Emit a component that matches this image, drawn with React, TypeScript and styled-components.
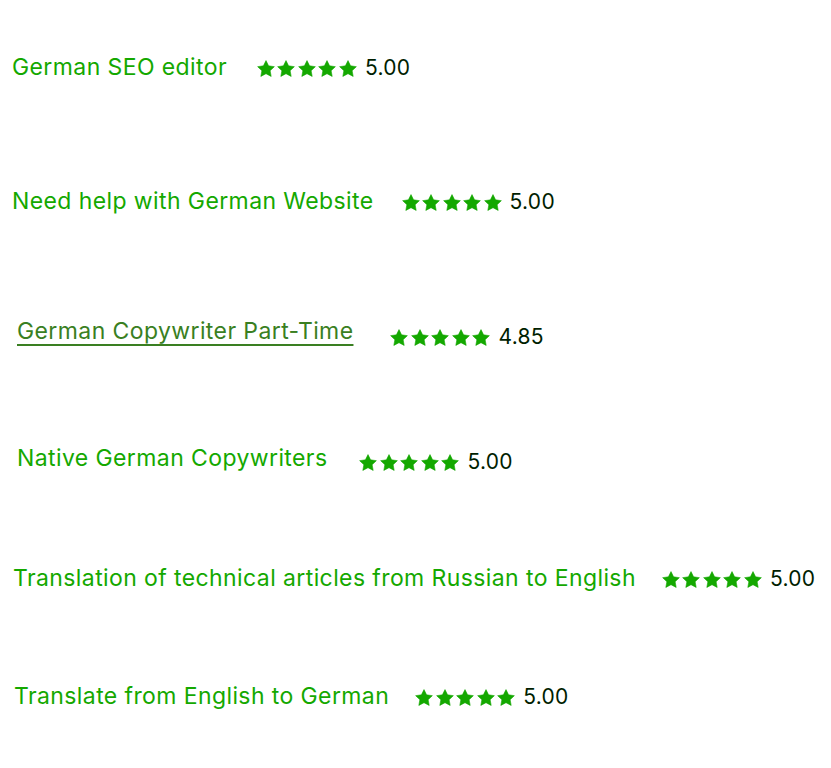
import React from 'react';
import styled, { createGlobalStyle } from 'styled-components';

const GlobalStyle = createGlobalStyle`
  html, body {
    margin: 0;
    padding: 0;
    background: #ffffff;
  }
  body {
    font-family: Inter, "Liberation Sans", Arial, sans-serif;
    -webkit-font-smoothing: antialiased;
  }
`;

interface IJob {
  title: string;
  rating: string;
  top: number;
  indent: number;
  gap: number;
  drop: number;
  active?: boolean;
}

const JOBS: IJob[] = [
  { title: 'German SEO editor', rating: '5.00', top: 0, indent: 12, gap: 30, drop: 1 },
  { title: 'Need help with German Website', rating: '5.00', top: 104, indent: 12, gap: 28, drop: 1 },
  { title: 'German Copywriter Part-Time', rating: '4.85', top: 100, indent: 17, gap: 37, drop: 6, active: true },
  { title: 'Native German Copywriters', rating: '5.00', top: 97, indent: 17, gap: 32, drop: 4 },
  { title: 'Translation of technical articles from Russian to English', rating: '5.00', top: 90, indent: 13, gap: 26, drop: 1 },
  { title: 'Translate from English to German', rating: '5.00', top: 88, indent: 14, gap: 26, drop: 1 },
];

// five-point star, slightly rounded at the tips
const Star = () => (
  <svg width="18" height="17" viewBox="0 0 24 23" aria-hidden="true">
    <path
      d="M12 0.8L15.5 7.9 23.3 9 17.6 14.4 19 22.2 12 18.5 5 22.2 6.4 14.4 0.7 9 8.5 7.9z"
      fill="#14a800"
      stroke="#14a800"
      strokeWidth="0.8"
      strokeLinejoin="round"
    />
  </svg>
);

export default function App() {
  return (
    <>
      <GlobalStyle />
      <List>
        {JOBS.map((job, idx) => (
          <Row key={idx} $top={job.top} $indent={job.indent} $gap={job.gap}>
            <Title href="#" $active={job.active}>
              {job.title}
            </Title>
            <Rating $drop={job.drop}>
              <Stars>
                {[0, 1, 2, 3, 4].map((s) => (
                  <Star key={s} />
                ))}
              </Stars>
              <Score>{job.rating}</Score>
            </Rating>
          </Row>
        ))}
      </List>
    </>
  );
}

const List = styled.div`
  display: flex;
  flex-direction: column;
  align-items: flex-start;
  padding-top: 52px;
`;

const Row = styled.div<{ $top: number; $indent: number; $gap: number }>`
  display: flex;
  align-items: center;
  height: 30px;
  margin-top: ${(p) => p.$top}px;
  padding-left: ${(p) => p.$indent}px;
  gap: ${(p) => p.$gap}px;
`;

const Title = styled.a<{ $active?: boolean }>`
  font-size: 23px;
  line-height: 30px;
  letter-spacing: 0.4px;
  white-space: nowrap;
  color: ${(p) => (p.$active ? '#3a7f22' : '#14a800')};
  text-decoration: ${(p) => (p.$active ? 'underline' : 'none')};
  text-decoration-thickness: 2px;
  text-underline-offset: 5px;
`;

const Rating = styled.div<{ $drop: number }>`
  display: flex;
  align-items: center;
  gap: 8px;
  padding-top: ${(p) => p.$drop * 2}px;
`;

const Stars = styled.div`
  display: flex;
  align-items: center;
  gap: 2.5px;
`;

const Score = styled.span`
  font-size: 21px;
  line-height: 24px;
  letter-spacing: 0.3px;
  color: #001e00;
`;
